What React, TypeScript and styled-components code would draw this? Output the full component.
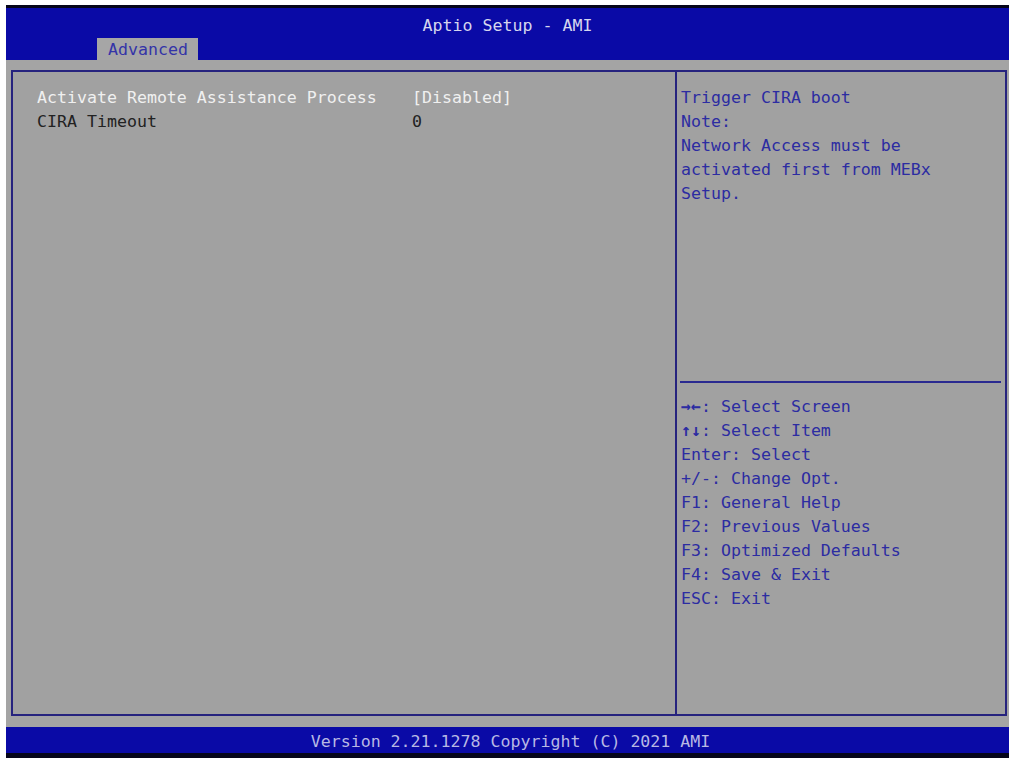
import { styled, createGlobalStyle } from "styled-components";

const GlobalStyle = createGlobalStyle`
    html, body {
        margin: 0;
        padding: 0;
        background: #ffffff;
    }
`;

const items = [
    { label: "Activate Remote Assistance Process", value: "[Disabled]", active: true },
    { label: "CIRA Timeout", value: "0", active: false },
];

const helpText = [
    "Trigger CIRA boot",
    "Note:",
    "Network Access must be",
    "activated first from MEBx",
    "Setup.",
];

const keys = [
    { key: "→←", text: ": Select Screen", arrow: true },
    { key: "↑↓", text: ": Select Item", arrow: true },
    { key: "Enter", text: ": Select" },
    { key: "+/-", text: ": Change Opt." },
    { key: "F1", text: ": General Help" },
    { key: "F2", text: ": Previous Values" },
    { key: "F3", text: ": Optimized Defaults" },
    { key: "F4", text: ": Save & Exit" },
    { key: "ESC", text: ": Exit" },
];

export default () => {
    return (
        <Page>
            <GlobalStyle />
            <Screen>
                <Header>
                    <Title>Aptio Setup - AMI</Title>
                    <TabRow>
                        <Tab>Advanced</Tab>
                    </TabRow>
                </Header>
                <Body>
                    <Frame>
                        <ItemsPanel>
                            {items.map((item) => (
                                <ItemRow key={item.label} $active={item.active}>
                                    <span>{item.label}</span>
                                    <span>{item.value}</span>
                                </ItemRow>
                            ))}
                        </ItemsPanel>
                        <SidePanel>
                            <HelpBlock>
                                {helpText.map((line) => (
                                    <HelpLine key={line}>{line}</HelpLine>
                                ))}
                            </HelpBlock>
                            <SideRule />
                            <KeysBlock>
                                {keys.map((line) => (
                                    <HelpLine key={line.key}>
                                        <KeyName $arrow={!!line.arrow}>{line.key}</KeyName>
                                        {line.text}
                                    </HelpLine>
                                ))}
                            </KeysBlock>
                        </SidePanel>
                    </Frame>
                </Body>
                <Footer>Version 2.21.1278 Copyright (C) 2021 AMI</Footer>
            </Screen>
        </Page>
    );
};

const Page = styled.div`
    width: 1015px;
    height: 762px;
    box-sizing: border-box;
    padding: 5px 6px 4px 6px;
    font-family: "DejaVu Sans Mono", "Liberation Mono", monospace;
    font-size: 16.6px;
    line-height: 24px;
`;

const Screen = styled.div`
    height: 753px;
    display: flex;
    flex-direction: column;
`;

const Header = styled.div`
    height: 52px;
    border-top: 3px solid #05051a;
    background: #0a0aa6;
    display: flex;
    flex-direction: column;
    justify-content: space-between;
`;

const Title = styled.div`
    padding-top: 6px;
    text-align: center;
    color: #d6d6ee;
`;

const TabRow = styled.div`
    display: flex;
    padding-left: 91px;
`;

const Tab = styled.div`
    height: 23px;
    line-height: 24px;
    padding: 0 10px 0 11px;
    background: #a6a6a6;
    color: #3434a8;
`;

const Body = styled.div`
    flex: 1;
    display: flex;
    background: #a4a4a4;
    padding: 10px 2px 11px 5px;
`;

const Frame = styled.div`
    flex: 1;
    display: flex;
    border: 2px solid #26237e;
    background: #a1a1a1;
`;

const ItemsPanel = styled.div`
    width: 662px;
    box-sizing: border-box;
    padding: 14px 0 0 24px;
    display: flex;
    flex-direction: column;
`;

const ItemRow = styled.div<{ $active: boolean }>`
    display: grid;
    grid-template-columns: 375px 1fr;
    white-space: pre;
    color: ${(props) => (props.$active ? "#f0f0f0" : "#222222")};
`;

const SidePanel = styled.div`
    flex: 1;
    display: flex;
    flex-direction: column;
    border-left: 2px solid #26237e;
`;

const HelpBlock = styled.div`
    height: 309px;
    box-sizing: border-box;
    padding: 14px 0 0 4px;
`;

const SideRule = styled.div`
    height: 2px;
    margin: 0 4px 0 3px;
    background: #2a2a90;
`;

const KeysBlock = styled.div`
    padding: 12px 0 0 4px;
`;

const HelpLine = styled.div`
    color: #2c2ca2;
    white-space: pre;
`;

const KeyName = styled.span<{ $arrow: boolean }>`
    font-weight: ${(props) => (props.$arrow ? "bold" : "normal")};
`;

const Footer = styled.div`
    height: 26px;
    line-height: 30px;
    border-bottom: 5px solid #05051a;
    background: #0a0aa6;
    color: #b8b8e4;
    text-align: center;
    padding-left: 6px;
`;
